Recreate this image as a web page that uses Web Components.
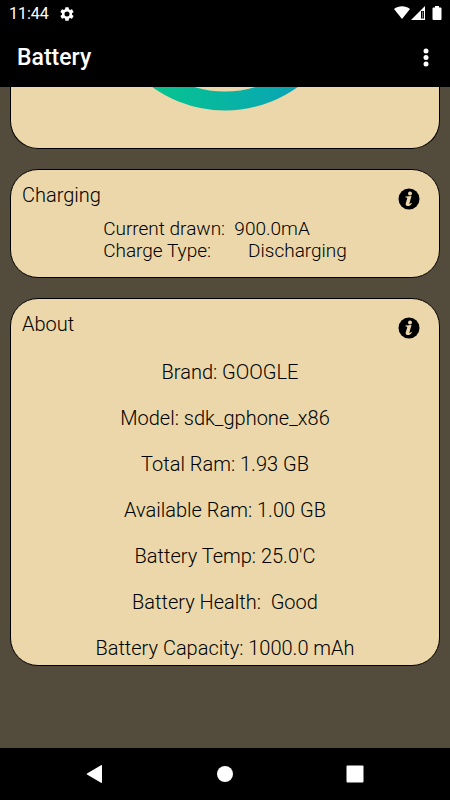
<!DOCTYPE html>
<html lang="en">
<head>
<meta charset="utf-8">
<meta name="viewport" content="width=device-width, initial-scale=1">
<title>Battery</title>
<style>
html, body { margin: 0; height: 100%; }
body { background: #534c3c; font-family: Roboto, "Liberation Sans", sans-serif; }
</style>
</head>
<body>
<battery-screen></battery-screen>
<script>
function define(name, html) {
  const template = document.createElement('template');
  template.innerHTML = html;
  customElements.define(name, class extends HTMLElement {
    constructor() {
      super();
      this.attachShadow({ mode: 'open' }).append(template.content.cloneNode(true));
    }
  });
}

define('status-bar', `
<style>
:host { display: flex; align-items: center; height: 28px; padding: 0 8px 0 9px; color: #fff; font-size: 16px; line-height: 28px; }
.gear { margin-left: 11px; }
.right { margin-left: auto; display: block; }
</style>
<span>11:44</span>
<svg class="gear" width="14" height="14" viewBox="2 2 20 20" fill="#fff" aria-hidden="true"><path d="M19.14 12.94c.04-.3.06-.61.06-.94s-.02-.64-.07-.94l2.03-1.58a.49.49 0 0 0 .12-.61l-1.92-3.32a.49.49 0 0 0-.59-.22l-2.39.96a7 7 0 0 0-1.62-.94l-.36-2.54A.48.48 0 0 0 13.92 2.400h-3.840a.48.48 0 0 0-.48.410l-.36 2.540a7.300 7.300 0 0 0-1.620.940l-2.390-.960a.48.48 0 0 0-.590.220L2.740 8.870a.48.48 0 0 0 .12.610l2.030 1.580c-.05.3-.09.63-.09.94s.02.64.07.94l-2.030 1.580a.49.49 0 0 0-.12.610l1.920 3.320c.12.22.37.29.59.22l2.390-.96c.5.38 1.030.7 1.620.94l.36 2.540c.05.24.24.41.48.41h3.840c.24 0 .44-.17.47-.41l.36-2.540a7 7 0 0 0 1.620-.94l2.390.96c.22.08.47 0 .59-.22l1.920-3.320a.48.48 0 0 0-.12-.61zM12 15.600A3.600 3.600 0 1 1 12 8.400a3.600 3.600 0 0 1 0 7.200z"/></svg>
<svg class="right" width="48" height="16" viewBox="0 0 48 16" fill="#fff" aria-hidden="true">
<path d="M0 3C4.500-.6 11.500-.6 16 3L8 13z"/>
<path d="M31 0v14H17z"/><path d="M27 5h3v7.500h-3z" fill="#000"/><path d="M28 5.500h1.200v7H28z" fill="#777"/>
<path d="M41 0h4v1.500h1.500a1 1 0 0 1 1 1V13a1 1 0 0 1-1 1h-7a1 1 0 0 1-1-1V2.500a1 1 0 0 1 1-1H41z"/>
</svg>`);

define('app-bar', `
<style>
:host { display: flex; align-items: center; justify-content: space-between; height: 59px; padding: 0 8px 0 17px; color: #fff; }
h1 { margin: 0; font-size: 23px; font-weight: 500; line-height: 28px; }
button { display: flex; justify-content: center; width: 32px; padding: 6px 0; border: 0; background: none; }
</style>
<h1><slot></slot></h1>
<button aria-label="More options"><svg width="8" height="20" viewBox="0 0 8 20" fill="#fff"><circle cx="4" cy="3" r="2.500"/><circle cx="4" cy="9.500" r="2.500"/><circle cx="4" cy="16" r="2.500"/></svg></button>`);

define('gauge-card', `
<style>
:host { display: block; height: 61px; background: #ebd7a9; border: solid #000; border-width: 0 1px 1px; border-radius: 0 0 28px 28px; box-sizing: content-box; }
svg { display: block; margin: 0 auto; }
</style>
<svg width="160" height="24" viewBox="0 0 160 24" role="img" aria-label="Battery level">
<defs><linearGradient id="g" gradientUnits="userSpaceOnUse" x1="10" y1="0" x2="150" y2="0"><stop offset="0" stop-color="#06c48f"/><stop offset="1" stop-color="#0aa5b5"/></linearGradient></defs>
<circle cx="80" cy="-101" r="115" fill="none" stroke="url(#g)" stroke-width="19"/>
</svg>`);

define('info-card', `
<style>
:host { display: block; margin-top: 20px; background: #ebd7a9; border: 1px solid #000; border-radius: 28px; color: #000; font-size: 20px; font-weight: 300; }
header { display: flex; justify-content: space-between; padding: 13px 19px 0 11px; }
h2 { margin: 0; font: inherit; line-height: 24px; }
button { display: block; margin-top: 5px; width: 22px; height: 22px; padding: 0; border: 0; background: none; }
svg { display: block; }
</style>
<header><h2><slot name="title"></slot></h2>
<button aria-label="Information"><svg width="22" height="22" viewBox="0 0 22 22"><circle cx="11" cy="11" r="10.500" fill="#000"/><circle cx="12" cy="5.500" r="2" fill="#ebd7a9"/><path d="M7.500 8.500l6-.5-2.100 7.500c-.2.900.6.700 1.800-.7l.7.600c-1.400 2-2.700 2.700-4.200 2.600-1.700 0-2.300-1-2-2.400l1.500-5.100c.2-.8-.3-.9-1.700-.9z" fill="#ebd7a9"/></svg></button></header>
<slot></slot>`);

define('charge-info', `
<style>
:host { display: block; width: max-content; margin: 0 auto; padding: 8px 0 15px; font-size: 19px; }
p { margin: 0; line-height: 22px; white-space: pre; }
</style>
<p>Current drawn:  900.0mA</p><p>Charge Type:        Discharging</p>`);

define('device-info', `
<style>
:host { display: grid; gap: 22px; padding: 21px 0 5px; text-align: center; }
p { margin: 0; line-height: 24px; white-space: pre-wrap; }
p:first-of-type { padding-left: 10px; }
</style>
<p>Brand: GOOGLE</p><p>Model: sdk_gphone_x86</p><p>Total Ram: 1.93 GB</p><p>Available Ram: 1.00 GB</p><p>Battery Temp: 25.0'C</p><p>Battery Health:  Good</p><p>Battery Capacity: 1000.0 mAh</p>`);

define('nav-bar', `
<style>
:host { display: flex; justify-content: center; gap: 82px; height: 52px; background: #000; }
button { display: flex; align-items: center; justify-content: center; width: 48px; padding: 0; border: 0; background: none; }
</style>
<button aria-label="Back"><svg width="20" height="20" viewBox="0 0 20 20"><path d="M17 1.800v16.400a.7.700 0 0 1-1 .6L2 10.500a.6.600 0 0 1 0-1L16 1.200a.7.700 0 0 1 1 .6z" fill="#fff"/></svg></button>
<button aria-label="Home"><svg width="20" height="20" viewBox="0 0 20 20"><circle cx="10" cy="10" r="8" fill="#fff"/></svg></button>
<button aria-label="Recents"><svg width="20" height="20" viewBox="0 0 20 20"><rect x="1.500" y="1.500" width="17" height="17" rx="1" fill="#fff"/></svg></button>`);

define('battery-screen', `
<style>
:host { display: flex; flex-direction: column; min-height: 100vh; background: #534c3c; }
.top { background: #000; }
main { flex: 1; padding: 0 10px 20px; }
</style>
<div class="top"><status-bar></status-bar><app-bar>Battery</app-bar></div>
<main>
<gauge-card></gauge-card>
<info-card><span slot="title">Charging</span><charge-info></charge-info></info-card>
<info-card><span slot="title">About</span><device-info></device-info></info-card>
</main>
<nav-bar></nav-bar>`);
</script>
</body>
</html>
